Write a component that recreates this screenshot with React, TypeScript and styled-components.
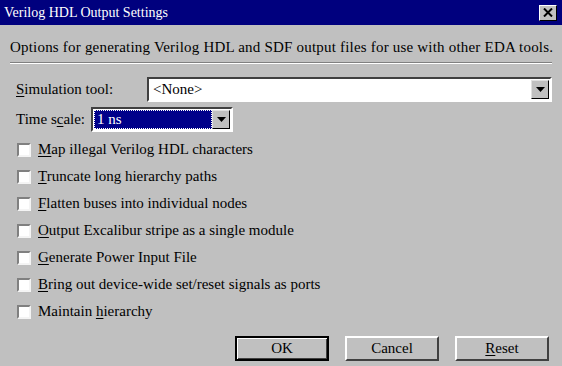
import React from "react";
import styled, { createGlobalStyle } from "styled-components";

const Global = createGlobalStyle`
  html, body {
    margin: 0;
    padding: 0;
    background: #c0c0c0;
  }
  body {
    font-family: "Liberation Serif", "Times New Roman", serif;
    color: #000;
  }
`;

const Window = styled.div`
  width: 562px;
  height: 366px;
  background: #c0c0c0;
  display: flex;
  flex-direction: column;
  overflow: hidden;
`;

const TitleBar = styled.div`
  height: 25px;
  background: #00007e;
  color: #fff;
  display: flex;
  align-items: center;
  justify-content: space-between;
  padding: 0 5px 0 4px;
  font-size: 14px;
`;

const CloseBtn = styled.div`
  width: 18px;
  height: 16px;
  background: #c0c0c0;
  box-sizing: border-box;
  border: 1px solid;
  border-color: #fff #000 #000 #fff;
  display: flex;
  align-items: center;
  justify-content: center;
`;

const Body = styled.div`
  padding: 13px 10px 0 10px;
  display: flex;
  flex-direction: column;
  font-size: 15px;
`;

const Intro = styled.div`
  line-height: 18px;
  white-space: nowrap;
  letter-spacing: 0.2px;
`;

const Rule = styled.div`
  margin-top: 6px;
  height: 0;
  border-top: 1px solid #808080;
  border-bottom: 1px solid #fff;
`;

const FieldRow = styled.div<{ $top: number }>`
  margin-top: ${(p) => p.$top}px;
  display: flex;
  align-items: center;
  padding-left: 6px;
`;

const Label = styled.span<{ $width?: number }>`
  width: ${(p) => (p.$width ? `${p.$width}px` : "auto")};
  white-space: nowrap;
`;

const Combo = styled.div<{ $width: number }>`
  width: ${(p) => p.$width}px;
  height: 25px;
  box-sizing: border-box;
  border: 2px solid;
  border-color: #404040 #fff #fff #404040;
  background: #fff;
  display: flex;
  align-items: stretch;
  padding: 1px;
`;

const ComboText = styled.div<{ $selected?: boolean }>`
  flex: 1;
  display: flex;
  align-items: center;
  padding-left: 3px;
  background: ${(p) => (p.$selected ? "#00008a" : "#fff")};
  color: ${(p) => (p.$selected ? "#fff" : "#000")};
  outline: ${(p) => (p.$selected ? "1px dotted #fff" : "none")};
  outline-offset: -1px;
`;

const DropBtn = styled.div`
  width: 18px;
  box-sizing: border-box;
  background: #c0c0c0;
  border: 1px solid;
  border-color: #e0e0e0 #000 #000 #e0e0e0;
  display: flex;
  align-items: center;
  justify-content: center;
`;

const Checks = styled.div`
  margin-top: 4px;
  display: flex;
  flex-direction: column;
`;

const CheckRow = styled.label`
  height: 27px;
  display: flex;
  align-items: center;
  gap: 7px;
  padding-left: 7px;
  white-space: nowrap;
`;

const Box = styled.span`
  width: 14px;
  height: 14px;
  box-sizing: border-box;
  background: #fff;
  border: 2px solid;
  border-color: #808080 #f4f4f4 #f4f4f4 #808080;
`;

const Buttons = styled.div`
  margin-top: 11px;
  display: flex;
  justify-content: flex-end;
  gap: 16px;
  padding-right: 3px;
`;

const Button = styled.div<{ $default?: boolean }>`
  width: 94px;
  height: 25px;
  box-sizing: border-box;
  display: flex;
  align-items: center;
  justify-content: center;
  background: #c0c0c0;
  border: 2px solid;
  border-color: ${(p) => (p.$default ? "#000" : "#fff #404040 #404040 #fff")};
  box-shadow: ${(p) =>
    p.$default ? "inset 1px 1px #fff, inset -1px -1px #404040" : "none"};
  font-size: 15px;
`;

const U = styled.u`
  text-underline-offset: 2px;
`;

const Arrow = () => (
  <svg width="9" height="5" viewBox="0 0 9 5">
    <path d="M0 0h9L4.5 5z" fill="#000" />
  </svg>
);

const options: [string, string, string][] = [
  ["", "M", "ap illegal Verilog HDL characters"],
  ["", "T", "runcate long hierarchy paths"],
  ["", "F", "latten buses into individual nodes"],
  ["", "O", "utput Excalibur stripe as a single module"],
  ["", "G", "enerate Power Input File"],
  ["", "B", "ring out device-wide set/reset signals as ports"],
  ["Maintain ", "h", "ierarchy"],
];

export default function App() {
  return (
    <Window>
      <Global />
      <TitleBar>
        <span>Verilog HDL Output Settings</span>
        <CloseBtn>
          <svg width="10" height="9" viewBox="0 0 10 9">
            <path d="M1 0.5l8 8M9 0.5l-8 8" stroke="#000" strokeWidth="2" />
          </svg>
        </CloseBtn>
      </TitleBar>
      <Body>
        <Intro>
          Options for generating Verilog HDL and SDF output files for use with
          other EDA tools.
        </Intro>
        <Rule />
        <FieldRow $top={13}>
          <Label $width={131}>
            <U>S</U>imulation tool:
          </Label>
          <Combo $width={405}>
            <ComboText>&lt;None&gt;</ComboText>
            <DropBtn>
              <Arrow />
            </DropBtn>
          </Combo>
        </FieldRow>
        <FieldRow $top={5}>
          <Label $width={75}>
            Time s<U>c</U>ale:
          </Label>
          <Combo $width={142}>
            <ComboText $selected>1 ns</ComboText>
            <DropBtn>
              <Arrow />
            </DropBtn>
          </Combo>
        </FieldRow>
        <Checks>
          {options.map(([pre, key, rest]) => (
            <CheckRow key={key + rest}>
              <Box />
              <span>
                {pre}
                <U>{key}</U>
                {rest}
              </span>
            </CheckRow>
          ))}
        </Checks>
        <Buttons>
          <Button $default>OK</Button>
          <Button>Cancel</Button>
          <Button>
            <U>R</U>eset
          </Button>
        </Buttons>
      </Body>
    </Window>
  );
}
